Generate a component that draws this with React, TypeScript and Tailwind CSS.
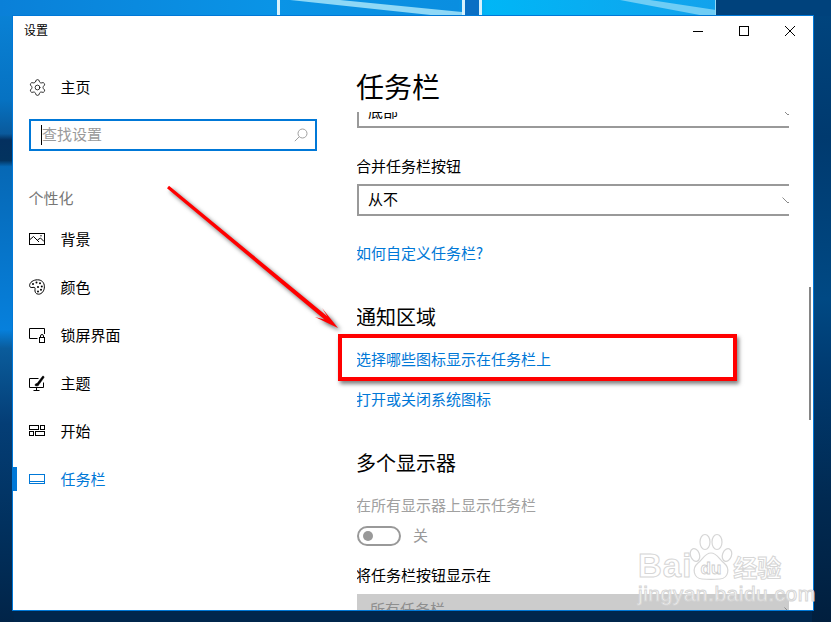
import React from "react";
import { Settings } from "lucide-react";

const font = "font-['Noto_Sans_CJK_SC','Liberation_Sans',sans-serif]";

function Wallpaper() {
  return (
    <svg className="absolute inset-0" width="831" height="622" viewBox="0 0 831 622">
      <defs>
        <linearGradient id="left" x1="0" y1="0" x2="0" y2="622" gradientUnits="userSpaceOnUse">
          <stop offset="0" stopColor="#0a84d8" />
          <stop offset="0.16" stopColor="#0672c2" />
          <stop offset="0.215" stopColor="#0a5a9c" />
          <stop offset="0.225" stopColor="#04305f" />
          <stop offset="0.258" stopColor="#03335f" />
          <stop offset="0.268" stopColor="#0668b5" />
          <stop offset="0.53" stopColor="#0680dc" />
          <stop offset="0.56" stopColor="#0a5c9c" />
          <stop offset="0.68" stopColor="#043e76" />
          <stop offset="0.84" stopColor="#01315f" />
          <stop offset="1" stopColor="#012448" />
        </linearGradient>
        <linearGradient id="right" x1="0" y1="0" x2="0" y2="622" gradientUnits="userSpaceOnUse">
          <stop offset="0" stopColor="#00457f" />
          <stop offset="0.22" stopColor="#003a6f" />
          <stop offset="0.48" stopColor="#004984" />
          <stop offset="0.6" stopColor="#003a70" />
          <stop offset="0.8" stopColor="#012a52" />
          <stop offset="1" stopColor="#011f3e" />
        </linearGradient>
        <linearGradient id="top" x1="0" y1="0" x2="716" y2="0" gradientUnits="userSpaceOnUse">
          <stop offset="0" stopColor="#0a80d8" />
          <stop offset="0.38" stopColor="#0a94e6" />
          <stop offset="0.64" stopColor="#0a8ee0" />
          <stop offset="0.68" stopColor="#00b6f6" />
          <stop offset="1" stopColor="#12a2ec" />
        </linearGradient>
      </defs>
      <rect x="0" y="0" width="831" height="622" fill="#00264c" />
      <rect x="0" y="0" width="14" height="622" fill="url(#left)" />
      <rect x="812" y="0" width="19" height="622" fill="url(#right)" />
      <rect x="0" y="0" width="716" height="16" fill="url(#top)" />
      <rect x="716" y="0" width="115" height="16" fill="#00427c" />
      <rect x="464" y="0" width="15" height="16" fill="#0a6fc4" />
      <polygon points="290,0 340,0 462,12 462,16 440,16" fill="#8fd8f6" />
      <polygon points="620,0 650,0 716,10 716,16 705,16" fill="#6fcdf5" />
      <rect x="277" y="0" width="3" height="16" fill="#d8f2fc" />
      <rect x="462" y="0" width="3" height="16" fill="#d8f2fc" />
      <rect x="479" y="0" width="3" height="16" fill="#d8f2fc" />
      <rect x="715" y="0" width="1" height="16" fill="#8fd8f6" />
    </svg>
  );
}

function IconImage() {
  return (
    <svg width="16" height="16" viewBox="0 0 16 16" fill="none" stroke="currentColor" strokeWidth="1" className="shrink-0">
      <rect x="0.500" y="2.500" width="15" height="11" />
      <path d="M1 8.500 L4.500 5.500 L10 11 M8.500 9 L11.500 7 L15 10.500" />
      <circle cx="12" cy="4.800" r="0.700" fill="currentColor" stroke="none" />
    </svg>
  );
}

function IconPalette() {
  return (
    <svg width="16" height="16" viewBox="0 0 16 16" fill="none" stroke="currentColor" strokeWidth="1" className="shrink-0">
      <path d="M8.500 0.800 C4.500 0.800 0.600 3.200 0.600 6.600 C0.600 8.600 2.600 8.800 4 8.400 C5.600 8 6.400 8.800 6 10.400 C5.600 12.600 6.600 15.200 9.500 15.200 C13 15.200 15.400 11.600 15.400 7.800 C15.400 3.400 12.600 0.800 8.500 0.800 Z" />
      <g fill="currentColor" stroke="none">
        <circle cx="4" cy="5" r="1" />
        <circle cx="7.500" cy="3.600" r="1" />
        <circle cx="11" cy="4.200" r="1" />
        <circle cx="12.800" cy="7.400" r="1" />
        <circle cx="12" cy="10.800" r="1" />
        <circle cx="9" cy="12.600" r="1" />
        <circle cx="9" cy="8" r="1" />
      </g>
    </svg>
  );
}

function IconLock() {
  return (
    <svg width="16" height="16" viewBox="0 0 16 16" fill="none" stroke="currentColor" strokeWidth="1" className="shrink-0">
      <path d="M8.500 11.500 H0.500 V1.500 H15.500 V7" />
      <rect x="10.500" y="10.500" width="5" height="5" />
      <path d="M11.500 10.500 V9 a1.500 1.500 0 0 1 3 0 V10.500" />
    </svg>
  );
}

function IconTheme() {
  return (
    <svg width="16" height="16" viewBox="0 0 16 16" fill="none" stroke="currentColor" strokeWidth="1" className="shrink-0">
      <path d="M9.500 3.500 H0.500 V12.500 H14.500 V7.500" />
      <path d="M7.500 12.500 V15 M4.500 15.500 H10.500" />
      <path d="M6 10.500 C6 9 7 8.400 8 8.600 L13.400 1.400 C14 0.600 15.600 1.600 15 2.600 L9.800 9.800 C9.600 11 7.600 11.400 6 10.500 Z" fill="currentColor" strokeWidth="0.500" />
    </svg>
  );
}

function IconStart() {
  return (
    <svg width="16" height="16" viewBox="0 0 16 16" fill="none" stroke="currentColor" strokeWidth="1" className="shrink-0">
      <rect x="0.500" y="2.500" width="9" height="4" />
      <rect x="11.500" y="2.500" width="4" height="4" />
      <rect x="0.500" y="8.500" width="4" height="4" />
      <rect x="6.500" y="8.500" width="9" height="4" />
    </svg>
  );
}

function IconTaskbar() {
  return (
    <svg width="16" height="16" viewBox="0 0 16 16" fill="none" stroke="currentColor" strokeWidth="1" className="shrink-0">
      <rect x="0.500" y="3.500" width="15" height="9" />
      <path d="M0.500 10.500 H15.500" />
    </svg>
  );
}

function NavRow({ icon, label, active }: { icon: React.ReactNode; label: string; active?: boolean }) {
  return (
    <div className={"relative flex h-[48px] items-center gap-4 pl-4 text-[15px] " + (active ? "text-[#0078d7]" : "text-black")}>
      {active && <div className="absolute left-0 top-[12px] h-[24px] w-[4px] bg-[#0078d7]" />}
      <span className="flex h-4 w-4 items-center justify-center">{icon}</span>
      <span className="-ml-[0.5px]">{label}</span>
    </div>
  );
}

function Chevron() {
  return (
    <svg width="12" height="7" viewBox="0 0 12 7" fill="none" stroke="#8a8a8a" strokeWidth="1">
      <path d="M0.500 0.500 L6 6 L11.500 0.500" />
    </svg>
  );
}

function Select({ label, disabled, className }: { label: string; disabled?: boolean; className?: string }) {
  return (
    <div
      className={
        "flex h-[32px] w-[447px] shrink-0 items-center justify-between pl-[9px] pr-[8px] text-[15px] " +
        (disabled ? "bg-[#cccccc] text-[#8e8e8e] " : "border-2 border-[#999999] text-black ") +
        (className ?? "")
      }
    >
      <span className="h-[20px] leading-[18px]">{label}</span>
      <Chevron />
    </div>
  );
}

function Heading({ children, className }: { children: React.ReactNode; className?: string }) {
  return <div className={"-ml-px h-[28px] shrink-0 text-[20px] leading-[26px] text-black " + (className ?? "")}>{children}</div>;
}

function TextLine({ children, className }: { children: React.ReactNode; className?: string }) {
  return <div className={"-ml-px h-[20px] shrink-0 text-[15px] leading-[18px] " + (className ?? "")}>{children}</div>;
}

function Watermark() {
  const outline = "text-white/85 [-webkit-text-stroke:1px_#d6d6d6]";
  return (
    <div className="absolute left-[638px] top-[533px] flex w-[150px] flex-col items-start">
      <div className="flex h-[48px] items-end">
        <span className={"font-['Liberation_Sans',sans-serif] text-[33px] font-bold leading-[30px] tracking-[1px] " + outline}>Bai</span>
        <svg width="46" height="48" viewBox="0 0 46 48" fill="none" stroke="#d6d6d6" strokeWidth="1.200" className="-ml-[4px] shrink-0">
          <ellipse cx="7" cy="22" rx="4.500" ry="6.500" transform="rotate(-20 7 22)" fill="#fff" />
          <ellipse cx="17" cy="9" rx="5" ry="7.500" fill="#fff" />
          <ellipse cx="29" cy="9" rx="5" ry="7.500" fill="#fff" />
          <ellipse cx="39" cy="22" rx="4.500" ry="6.500" transform="rotate(20 39 22)" fill="#fff" />
          <path d="M23 20 C17 20 15 26 10 30 C4 35 5 45 14 46 C19 46.500 27 46.500 32 46 C41 45 42 35 36 30 C31 26 29 20 23 20 Z" fill="#fff" />
          <text x="23" y="41" textAnchor="middle" fontSize="17" fontWeight="700" fontFamily="Liberation Sans" fill="#fff" stroke="#cccccc" strokeWidth="0.800">du</text>
        </svg>
        <span className={"-ml-[1px] text-[24px] font-bold leading-[28px] " + outline}>经验</span>
      </div>
      <div className={"mt-[2px] font-['Liberation_Sans',sans-serif] text-[21px] leading-[22px] tracking-[0.500px] whitespace-nowrap " + outline}>jingyan.baidu.com</div>
    </div>
  );
}

function Annotations() {
  return (
    <>
      <svg className="absolute left-0 top-0 drop-shadow-[3px_3px_2px_rgba(0,0,0,0.6)]" width="831" height="622" viewBox="0 0 831 622">
        <polygon points="167,188.200 169,185.800 327.500,316.500 322,308 338,328 315,317 324.500,319.500" fill="#ff0000" />
      </svg>
      <div className="absolute left-[338px] top-[334px] h-[47px] w-[399px] border-4 border-[#ff0000] shadow-[2px_3px_4px_rgba(0,0,0,0.5)]" />
    </>
  );
}

export default function App() {
  return (
    <div className={"relative h-[622px] w-[831px] overflow-hidden pl-[12px] pt-[15px] " + font}>
      <Wallpaper />
      <div className="relative flex h-[596px] w-[802px] flex-col border border-[#0078d7] bg-white">
        <div className="flex h-[30px] shrink-0 items-center justify-between">
          <span className="h-[20px] pl-[11px] text-[12px] leading-[18px] text-black">设置</span>
          <div className="flex">
            <div className="flex h-[30px] w-[46px] items-center justify-center">
              <svg width="10" height="10" viewBox="0 0 10 10" stroke="#000" strokeWidth="1"><path d="M0 5.500 H10" /></svg>
            </div>
            <div className="flex h-[30px] w-[46px] items-center justify-center">
              <svg width="10" height="10" viewBox="0 0 10 10" fill="none" stroke="#000" strokeWidth="1"><rect x="0.500" y="0.500" width="9" height="9" /></svg>
            </div>
            <div className="flex h-[30px] w-[46px] items-center justify-center">
              <svg width="10" height="10" viewBox="0 0 10 10" fill="none" stroke="#000" strokeWidth="1"><path d="M0 0 L10 10 M10 0 L0 10" /></svg>
            </div>
          </div>
        </div>
        <div className="flex min-h-0 flex-1">
          <div className="w-[344px] shrink-0">
            <div className="mt-[17px]">
              <NavRow icon={<Settings size={19} strokeWidth={1} className="shrink-0" />} label="主页" />
            </div>
            <div className="mx-4 mt-2 flex h-[32px] w-[288px] items-center justify-between border-2 border-[#0078d7] pl-[10px] pr-[7px] text-[15px] text-[#9a9a9a]">
              <span className="relative h-[20px] border-l border-black leading-[18px]">查找设置</span>
              <svg width="14" height="14" viewBox="0 0 14 14" fill="none" stroke="#a0a0a0" strokeWidth="1">
                <circle cx="8.500" cy="5.500" r="4.500" />
                <path d="M5.200 8.800 L0.800 13.200" />
              </svg>
            </div>
            <div className="mt-[32px] flex h-[32px] items-center pb-[2px] pl-[15.5px] text-[15px] text-[#767676]">个性化</div>
            <NavRow icon={<IconImage />} label="背景" />
            <NavRow icon={<IconPalette />} label="颜色" />
            <NavRow icon={<IconLock />} label="锁屏界面" />
            <NavRow icon={<IconTheme />} label="主题" />
            <NavRow icon={<IconStart />} label="开始" />
            <NavRow icon={<IconTaskbar />} label="任务栏" active />
          </div>
          <div className="relative flex min-w-0 flex-1 flex-col pr-[24px]">
            <div className="-ml-px h-[66px] shrink-0 pt-[26px] text-[28px] leading-[28px] text-black">任务栏</div>
            <div className="flex min-h-0 flex-1 flex-col overflow-hidden">
              <Select label="底部" className="-mt-[16px]" />
              <TextLine className="mt-[29px] text-black">合并任务栏按钮</TextLine>
              <Select label="从不" className="mt-[7px]" />
              <TextLine className="mt-[28px] text-[#0078d7]">如何自定义任务栏?</TextLine>
              <Heading className="mt-[40px]">通知区域</Heading>
              <TextLine className="mt-[18px] text-[#0078d7]">选择哪些图标显示在任务栏上</TextLine>
              <TextLine className="mt-[20px] text-[#0078d7]">打开或关闭系统图标</TextLine>
              <Heading className="mt-[40px]">多个显示器</Heading>
              <TextLine className="mt-[18px] text-[#a0a0a0]">在所有显示器上显示任务栏</TextLine>
              <div className="mt-[10px] flex shrink-0 items-center gap-3">
                <div className="flex h-[20px] w-[44px] items-center rounded-full border-2 border-[#999999] pl-[4px]">
                  <div className="h-[10px] w-[10px] rounded-full bg-[#999999]" />
                </div>
                <span className="h-[20px] text-[15px] leading-[18px] text-[#999999]">关</span>
              </div>
              <TextLine className="mt-[20px] text-black">将任务栏按钮显示在</TextLine>
              <Select label="所有任务栏" disabled className="mt-[8px] pl-[13px]" />
            </div>
            <div className="absolute right-[2px] top-[241px] h-[133px] w-[2px] bg-[#858585]" />
          </div>
        </div>
      </div>
      <Annotations />
      <Watermark />
    </div>
  );
}
